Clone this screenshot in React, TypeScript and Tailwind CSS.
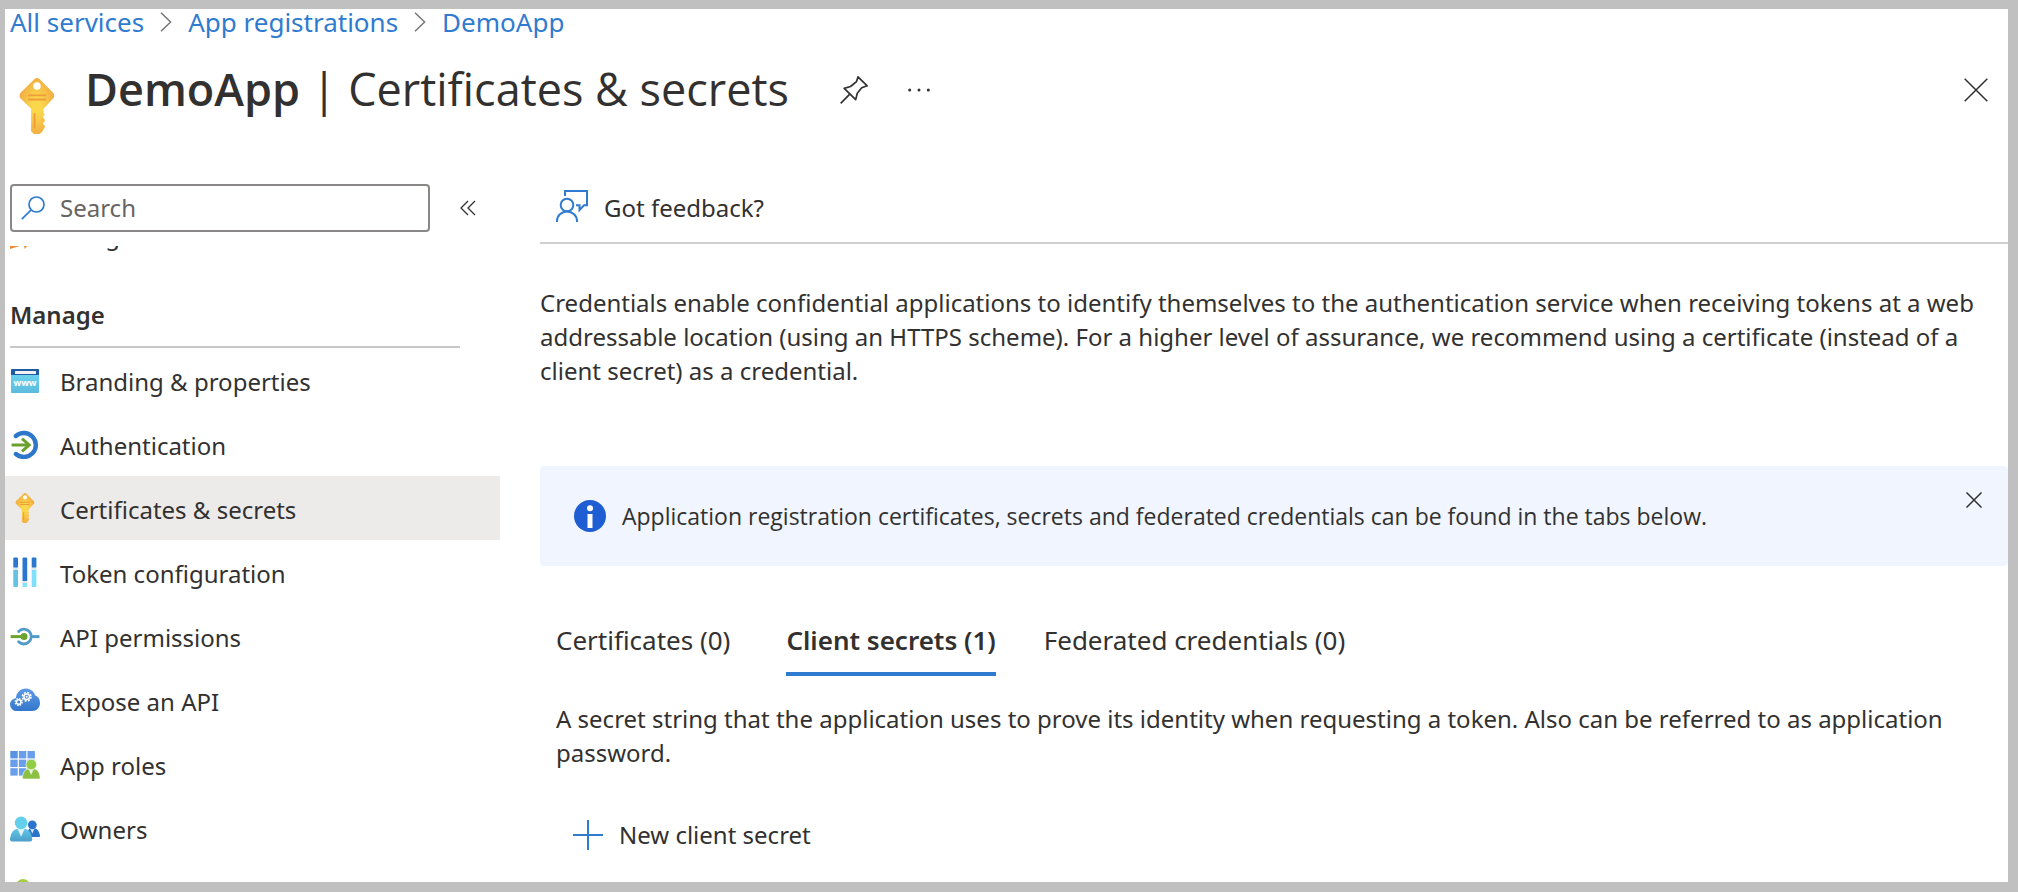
import React from "react";

type IconProps = { className?: string };

function KeyIcon({ className }: IconProps) {
  return (
    <svg viewBox="0 0 18 18" className={className} aria-hidden="true">
      <defs>
        <radialGradient id="keyFill" cx="50%" cy="48%" r="52%">
          <stop offset="0.25" stopColor="#fbd84b" />
          <stop offset="1" stopColor="#f2ab42" />
        </radialGradient>
      </defs>
      <path
        fill="url(#keyFill)"
        d="M8.100.4a1.300 1.300 0 0 1 1.800 0l4.200 4.300a1.400 1.400 0 0 1 0 2L11.100 9.900v1.400l.4.5-.7.7.7.8v.6l-.7.7.7.7v.6l-.5.7-.2.5-1.400 1.400a.7.7 0 0 1-.9 0l-1.400-1.400V9.900L3.800 6.700a1.400 1.400 0 0 1 0-2z"
      />
      <circle cx="9" cy="2.600" r="1.200" fill="#fff" />
      <path d="M6.100 5.600h5.800M6.100 6.900h5.800" stroke="#ee9c3c" strokeWidth="0.600" />
      <path d="M8.200 11.300v4.900" stroke="#ee9c3c" strokeWidth="0.600" />
    </svg>
  );
}

function RocketIcon({ className }: IconProps) {
  return (
    <svg viewBox="0 0 30 30" className={className} aria-hidden="true">
      <path fill="#2f7bd1" d="M6 18C10 8 18 2 28 2c0 10-6 17-15 21z" />
      <path fill="#ec8b34" d="M0 30V22l16 3zM14.500 30l-1-10h10z" />
    </svg>
  );
}

function BrandingIcon({ className }: IconProps) {
  return (
    <svg viewBox="0 0 30 30" className={className} aria-hidden="true">
      <defs>
        <linearGradient id="pageFill" x1="0" y1="0" x2="0" y2="1">
          <stop offset="0" stopColor="#6fd8f2" />
          <stop offset="1" stopColor="#5bbbdd" />
        </linearGradient>
      </defs>
      <rect x="1" y="4" width="28" height="24" rx="1" fill="url(#pageFill)" />
      <path d="M2 4h26a1 1 0 0 1 1 1v5H1V5a1 1 0 0 1 1-1z" fill="#1f5aa3" />
      <rect x="5" y="6" width="21" height="3" rx="0.600" fill="#f2f2f2" />
      <text
        x="15"
        y="20.500"
        textAnchor="middle"
        fontSize="9"
        fontWeight="700"
        fontFamily="Open Sans, sans-serif"
        fill="#fff"
      >
        www
      </text>
    </svg>
  );
}

function AuthenticationIcon({ className }: IconProps) {
  return (
    <svg viewBox="0 0 30 30" className={className} aria-hidden="true" fill="none">
      <path
        d="M5.900 7a12 12 0 1 1 0 18"
        stroke="#2f77c8"
        strokeWidth="4.400"
        strokeLinecap="round"
      />
      <path d="M1.600 16h17" stroke="#6aa12d" strokeWidth="3" />
      <path d="m12 9.600 7.200 6.400-7.200 6.400" stroke="#6aa12d" strokeWidth="3" />
    </svg>
  );
}

function TokenIcon({ className }: IconProps) {
  return (
    <svg viewBox="0 0 30 30" className={className} aria-hidden="true">
      <rect x="3.300" y="0.500" width="4.700" height="10.500" rx="1" fill="#2b76cf" />
      <rect x="3.300" y="12.500" width="4.700" height="17.500" rx="1" fill="#62c3e2" />
      <rect x="2.800" y="10.500" width="5.700" height="2" fill="#e6e6e6" />
      <rect x="12.500" y="0.500" width="4.700" height="24" rx="1" fill="#2b76cf" />
      <rect x="12.500" y="25.500" width="4.700" height="4.500" rx="1" fill="#83e3fb" />
      <rect x="12" y="24" width="5.700" height="2" fill="#e6e6e6" />
      <rect x="21.700" y="0.500" width="4.700" height="10.500" rx="1" fill="#2b76cf" />
      <rect x="21.700" y="12.500" width="4.700" height="17.500" rx="1" fill="#7fe0fa" />
      <rect x="21.200" y="10.500" width="5.700" height="2" fill="#e6e6e6" />
    </svg>
  );
}

function ApiIcon({ className }: IconProps) {
  return (
    <svg viewBox="0 0 30 30" className={className} aria-hidden="true" fill="none">
      <path
        d="M8.600 10.400a7.400 7.400 0 1 1 0 10.400"
        stroke="#519bc9"
        strokeWidth="2.800"
        strokeLinecap="round"
      />
      <path d="M21.500 15.600h8" stroke="#519bc9" strokeWidth="3" />
      <path d="M.6 15.600H14" stroke="#6ba32e" strokeWidth="3" />
      <circle cx="14" cy="15.600" r="3.500" fill="#6ba32e" />
    </svg>
  );
}

function CloudIcon({ className }: IconProps) {
  return (
    <svg viewBox="0 0 30 30" className={className} aria-hidden="true" fill="none">
      <defs>
        <linearGradient id="cloudFill" x1="0" y1="0" x2="0" y2="1">
          <stop offset="0" stopColor="#5c9ae8" />
          <stop offset="1" stopColor="#3577cb" />
        </linearGradient>
      </defs>
      <path
        fill="url(#cloudFill)"
        d="M6.600 26A6.600 6.600 0 0 1 0 19.600c0-3.400 2.600-6 5.900-6.400C6.300 7.600 10.500 3.500 15.900 3.500c4.400 0 8.200 2.900 9.300 7.100 2.800.6 4.800 3.700 4.800 7.400 0 4.600-3.400 8-7.800 8z"
      />
      <circle cx="16.700" cy="11.700" r="4.200" stroke="#fff" strokeWidth="1.800" strokeDasharray="1.900 1.400" />
      <circle cx="16.700" cy="11.700" r="2.800" stroke="#fff" strokeWidth="1.500" />
      <circle cx="16.700" cy="11.700" r="1" fill="#fff" />
      <circle cx="8.700" cy="17" r="3.400" stroke="#fff" strokeWidth="1.500" strokeDasharray="1.500 1.170" />
      <circle cx="8.700" cy="17" r="2.200" stroke="#fff" strokeWidth="1.400" />
    </svg>
  );
}

function RolesIcon({ className }: IconProps) {
  const cells = [0, 1, 2];
  return (
    <svg viewBox="0 0 30 30" className={className} aria-hidden="true">
      {cells.map((row) =>
        cells.map((col) => (
          <rect
            key={`${row}-${col}`}
            x={0.3 + col * 8.6}
            y={2 + row * 8.6}
            width="7.400"
            height="7.400"
            fill={row + col === 0 ? "#5a93e2" : "#699fea"}
          />
        )),
      )}
      <path
        d="M12.400 28.500c.4-3.600 1.800-8 5.500-8.500h6.800c3.700.5 5 4.900 5.400 8.500 0 1-.6 1.500-1.400 1.500H13.800c-.8 0-1.400-.6-1.400-1.500z"
        fill="#8cc043"
        stroke="#fff"
        strokeWidth="0.600"
      />
      <path d="m18.400 19.700 2.700 6.300 2.800-6.300z" fill="#e8f3d8" />
      <circle cx="21.300" cy="15.500" r="5.300" fill="#92cd48" stroke="#fff" strokeWidth="0.600" />
    </svg>
  );
}

function OwnersIcon({ className }: IconProps) {
  return (
    <svg viewBox="0 0 30 30" className={className} aria-hidden="true">
      <defs>
        <linearGradient id="ownerFill" x1="0" y1="0" x2="0" y2="1">
          <stop offset="0" stopColor="#62c8e6" />
          <stop offset="1" stopColor="#4c9ecb" />
        </linearGradient>
      </defs>
      <path d="M16 24c0-4 2-8 4.500-8.500h4.600c3 .5 4.500 4.500 4.900 7.300 0 .8-.5 1.200-1.200 1.200z" fill="#2b74ca" />
      <path d="m20 15.600 2.300 5 2.300-5z" fill="#dce9f8" />
      <circle cx="22.300" cy="11.800" r="4.400" fill="#2b74ca" />
      <path
        d="M0 26.500c.5-4.700 2.200-10 6.900-10.600H15.400c4.700.6 6.400 5.900 6.900 10.600 0 1.100-.8 1.900-1.800 1.900H1.800C.8 28.400 0 27.600 0 26.500z"
        fill="url(#ownerFill)"
      />
      <path d="m7.600 15.700 3.500 8 3.500-8z" fill="#e4f3fa" />
      <circle cx="11.100" cy="9.900" r="6.300" fill="#64cfeb" />
    </svg>
  );
}

function PersonIcon({ className }: IconProps) {
  return (
    <svg viewBox="0 0 30 30" className={className} aria-hidden="true">
      <circle cx="13" cy="9" r="7" fill="#a5cd45" />
      <path d="M2 30c0-8 4-13 11-13s11 5 11 13z" fill="#86b93f" />
    </svg>
  );
}

function CloseIcon({ className }: IconProps) {
  return (
    <svg viewBox="0 0 24 24" className={className} aria-hidden="true" fill="none" stroke="currentColor">
      <path d="m.7.7 22.600 22.600M23.300.7.7 23.300" vectorEffect="non-scaling-stroke" strokeWidth="1.500" />
    </svg>
  );
}

function ChevronIcon() {
  return (
    <svg viewBox="0 0 12 20" className="h-5 w-3 text-[#767676]" aria-hidden="true" fill="none" stroke="currentColor">
      <path d="m1 .7 9.600 9.300L1 19.300" strokeWidth="1.500" />
    </svg>
  );
}

const navItems: { label: string; Icon: (p: IconProps) => React.JSX.Element }[] = [
  { label: "Branding & properties", Icon: BrandingIcon },
  { label: "Authentication", Icon: AuthenticationIcon },
  { label: "Certificates & secrets", Icon: KeyIcon },
  { label: "Token configuration", Icon: TokenIcon },
  { label: "API permissions", Icon: ApiIcon },
  { label: "Expose an API", Icon: CloudIcon },
  { label: "App roles", Icon: RolesIcon },
  { label: "Owners", Icon: OwnersIcon },
  { label: "Roles and administrators", Icon: PersonIcon },
];

function NavItem({ label, Icon, active = false }: { label: string; Icon: (p: IconProps) => React.JSX.Element; active?: boolean }) {
  return (
    <a
      href="#"
      aria-current={active ? "page" : undefined}
      className={`flex h-16 shrink-0 items-center gap-5 pl-[5px] ${active ? "bg-[#edebe9]" : ""}`}
    >
      <Icon className="size-[30px] shrink-0" />
      <span className="pt-[3px]">{label}</span>
    </a>
  );
}

const crumbs = ["All services", "App registrations", "DemoApp"];
const tabs = ["Certificates (0)", "Client secrets (1)", "Federated credentials (0)"];

export default function App() {
  return (
    <div className="flex h-screen flex-col overflow-hidden border-t-[9px] border-r-[10px] border-b-[10px] border-l-[5px] border-[#c0c0c0] bg-white font-['Noto_Sans','Open_Sans',sans-serif] text-[24px] leading-[34px] text-[#323130]">
      <nav aria-label="Breadcrumb" className="flex h-[26px] shrink-0 items-center gap-4 pl-[5px] text-[26px] text-[#2f7bd0]">
        {crumbs.map((crumb, i) => (
          <React.Fragment key={crumb}>
            {i > 0 && <ChevronIcon />}
            <a href="#">{crumb}</a>
          </React.Fragment>
        ))}
      </nav>

      <header className="flex h-[149px] shrink-0 items-start pt-[22px] pr-5 pl-1">
        <KeyIcon className="mt-[21px] h-14 w-14 shrink-0" />
        <div className="ml-5 flex h-[66px] grow items-center">
          <h1 className="pb-[2px] font-['Open_Sans','Noto_Sans',sans-serif] text-[45px] leading-[64px]">
            <span className="font-semibold">DemoApp</span> | Certificates &amp; secrets
          </h1>
          <button type="button" aria-label="Pin" className="ml-[51px]">
            <svg viewBox="0 0 28 28" className="size-7" fill="none" stroke="currentColor" strokeWidth="1.700" strokeLinejoin="round">
              <path d="m18 .9 9.200 8.900-5.500 2-4.400 5.500-1.600 6.300L4.200 12.400l6.300-1.900L16.500 5.600zM9.300 18.700.7 27.300" />
            </svg>
          </button>
          <button type="button" aria-label="More" className="ml-10">
            <svg viewBox="0 0 22 4" className="h-1 w-[22px]" fill="currentColor">
              <circle cx="1.700" cy="2" r="1.500" />
              <circle cx="11" cy="2" r="1.500" />
              <circle cx="20.300" cy="2" r="1.500" />
            </svg>
          </button>
          <button type="button" aria-label="Close" className="ml-auto">
            <CloseIcon className="size-6" />
          </button>
        </div>
      </header>

      <div className="flex min-h-0 grow">
        <aside className="flex w-[495px] shrink-0 flex-col">
          <div className="flex shrink-0 items-center gap-[30px] pl-[5px]">
            <label className="flex h-12 w-[420px] items-center gap-[15px] rounded border-2 border-[#8a8886] pl-[9px]">
              <svg viewBox="0 0 24 24" className="h-6 w-6 shrink-0" fill="none" stroke="#2f7bd0" strokeWidth="1.700">
                <circle cx="15.500" cy="8.500" r="7.500" />
                <path d="M10.200 13.800.8 23.200" />
              </svg>
              <input
                type="text"
                aria-label="Search"
                placeholder="Search"
                className="min-w-0 grow bg-transparent placeholder:text-[#666461] focus:outline-none"
              />
            </label>
            <button type="button" aria-label="Collapse menu">
              <svg viewBox="0 0 16 16" className="size-4" fill="none" stroke="currentColor" strokeWidth="1.300">
                <path d="M8 1 1 8l7 7M15 1 8 8l7 7" />
              </svg>
            </button>
          </div>

          <nav aria-label="App" className="mt-[14px] flex min-h-0 grow flex-col overflow-hidden">
            <div className="-mt-11 shrink-0">
              <NavItem label="Integration assistant" Icon={RocketIcon} />
            </div>
            <h2 className="mr-10 ml-[5px] flex h-[82px] shrink-0 items-center border-b-2 border-[#c8c8c8] pt-[18px] font-semibold">
              Manage
            </h2>
            {navItems.map(({ label, Icon }) => (
              <NavItem key={label} label={label} Icon={Icon} active={label === "Certificates & secrets"} />
            ))}
          </nav>
        </aside>

        <main className="ml-10 min-w-0 grow">
          <div className="flex h-[60px] items-start border-b-2 border-[#d2d0ce] pl-4">
            <button type="button" className="flex h-12 items-center gap-4">
              <svg viewBox="0 0 32 32" className="-mt-1 size-8" fill="none" stroke="#2f7bd0" strokeWidth="2">
                <circle cx="11" cy="15" r="6.300" />
                <path d="M1 32v-1a10 9.500 0 0 1 20 0v1M9 6V1h22v14.300h-3L23.500 20v-4.700H20" />
              </svg>
              Got feedback?
            </button>
          </div>

          <p className="mt-[42px] pr-2">
            Credentials enable confidential applications to identify themselves to the authentication service when
            receiving tokens at a web addressable location (using an HTTPS scheme). For a higher level of assurance, we
            recommend using a certificate (instead of a client secret) as a credential.
          </p>

          <div className="mt-[78px] flex h-[100px] items-start rounded bg-[#f0f5ff] pr-[26px] pl-[34px]">
            <div className="flex h-full items-center gap-4 font-['Open_Sans','Noto_Sans',sans-serif] text-[23px]">
              <svg viewBox="0 0 32 32" className="size-8 shrink-0" aria-hidden="true">
                <circle cx="16" cy="16" r="16" fill="#1f5dd3" />
                <circle cx="16" cy="8.300" r="3" fill="#fff" />
                <path d="M13.500 14h5v14h-5z" fill="#fff" />
              </svg>
              <p>Application registration certificates, secrets and federated credentials can be found in the tabs below.</p>
            </div>
            <button type="button" aria-label="Dismiss" className="mt-[26px] ml-auto">
              <CloseIcon className="size-4" />
            </button>
          </div>

          <div role="tablist" className="mt-[50px] ml-4 flex gap-12 text-[26px]">
            {tabs.map((tab, i) => (
              <button
                key={tab}
                type="button"
                role="tab"
                aria-selected={i === 1}
                className={`h-[60px] border-b-4 pb-2 ${i === 1 ? "border-[#2f7bd0] font-semibold" : "border-transparent pr-2"}`}
              >
                {tab}
              </button>
            ))}
          </div>

          <p className="mt-[26px] ml-4 pr-6">
            A secret string that the application uses to prove its identity when requesting a token. Also can be
            referred to as application password.
          </p>

          <button type="button" className="mt-12 ml-[33px] flex items-center gap-4">
            <svg viewBox="0 0 30 30" className="size-[30px]" fill="none" stroke="#2f7bd0" strokeWidth="2">
              <path d="M15 0v30M0 15h30" />
            </svg>
            New client secret
          </button>
        </main>
      </div>
    </div>
  );
}
